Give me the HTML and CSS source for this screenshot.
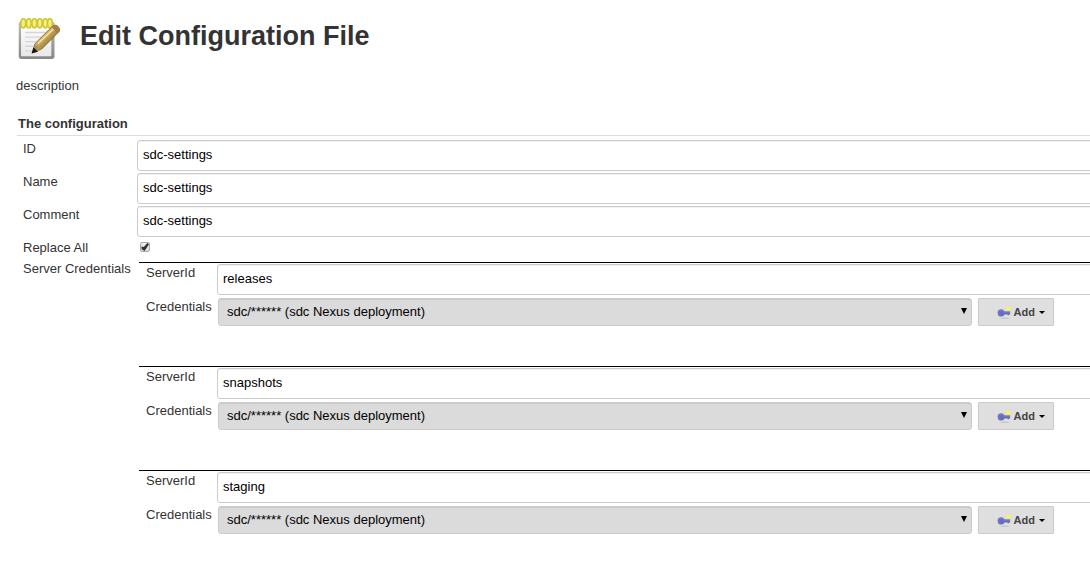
FILE: index.html
```html
<!DOCTYPE html>
<html lang="en">
<head>
<meta charset="utf-8">
<title>Edit Configuration File</title>
<link rel="stylesheet" href="styles.css">
</head>
<body>
<svg class="defs" aria-hidden="true">
  <defs>
    <symbol id="key" viewBox="0 0 16 16">
      <ellipse cx="8" cy="14.500" rx="5" ry="0.800" fill="#c8c8c8"/>
      <path d="M5 7.500h8.500v3H12v1h-1v-1H5z" fill="#656dae"/>
      <path d="M6 8h7" stroke="#8187be" stroke-width="1"/>
      <ellipse cx="4.200" cy="9" rx="3.600" ry="3.700" fill="#7279c3"/>
      <ellipse cx="4.700" cy="9.500" rx="2.400" ry="2.300" fill="#656db9"/>
      <circle cx="11.500" cy="4.700" r="2.300" fill="#f0f05a"/>
      <circle cx="11.500" cy="4.700" r="1.300" fill="#ffff30"/>
    </symbol>
  </defs>
</svg>
<main class="page">
  <header class="heading">
    <svg class="notepad" viewBox="0 0 48 48" aria-hidden="true">
      <defs>
        <linearGradient id="paper" x1="0" y1="0" x2="0" y2="1">
          <stop offset="0" stop-color="#ffffff"/><stop offset="1" stop-color="#e8e8ea"/>
        </linearGradient>
        <linearGradient id="edge" x1="0" y1="0" x2="0" y2="1">
          <stop offset="0" stop-color="#b9bcb6"/><stop offset="1" stop-color="#858a83"/>
        </linearGradient>
        <linearGradient id="wood" x1="0" y1="0" x2="1" y2="1">
          <stop offset="0.300" stop-color="#e5cf86"/><stop offset="0.700" stop-color="#927024"/>
        </linearGradient>
      </defs>
      <rect x="3" y="6" width="39" height="41" rx="3" fill="url(#edge)"/>
      <rect x="5.500" y="8" width="33" height="36" rx="1" fill="url(#paper)"/>
      <path d="M10 18h24M10 23h20M10 28h17M10 33h12M10 38h9" stroke="#d6d6d9" stroke-width="1.500"/>
      <g fill="#f4ef86" stroke="#d0c62a" stroke-width="1.800">
        <ellipse cx="8" cy="8" rx="2.600" ry="5"/><ellipse cx="14" cy="8" rx="2.600" ry="5"/>
        <ellipse cx="20" cy="8" rx="2.600" ry="5"/><ellipse cx="26" cy="8" rx="2.600" ry="5"/>
        <ellipse cx="32" cy="8" rx="2.600" ry="5"/><ellipse cx="37" cy="8" rx="2.600" ry="5"/>
      </g>
      <path d="M18 40l3-10 19-19c4-3 9 2 7 6L28 36z" fill="url(#wood)" stroke="#86682a" stroke-width="1"/>
      <path d="M24 30l17-16" stroke="#eedc9a" stroke-width="2"/>
      <path d="M18 40l3-9 6 6z" fill="#ad9259"/>
      <path d="M17 41l2-7 5 5z" fill="#191510"/>
      <path d="M39 12l6 7 2-2c2-4-3-9-7-6z" fill="#a77e45"/>
    </svg>
    <h1 class="title">Edit Configuration File</h1>
  </header>
  <p class="description">description</p>
  <form class="config">
    <h2 class="section">The configuration</h2>
    <div class="fields">
      <label class="label" for="id">ID</label>
      <input class="text" id="id" type="text" value="sdc-settings">
      <label class="label" for="name">Name</label>
      <input class="text" id="name" type="text" value="sdc-settings">
      <label class="label" for="comment">Comment</label>
      <input class="text" id="comment" type="text" value="sdc-settings">
      <label class="label" for="replace">Replace All</label>
      <div class="check-cell"><input class="check" id="replace" type="checkbox" checked></div>
      <span class="label" id="servers">Server Credentials</span>
      <div class="servers" role="group" aria-labelledby="servers">
        <div class="server">
          <label class="sublabel" for="server1">ServerId</label>
          <input class="text" id="server1" type="text" value="releases">
          <label class="sublabel" for="cred1">Credentials</label>
          <div class="credential">
            <div class="picker"><select class="select" id="cred1"><option>sdc/****** (sdc Nexus deployment)</option></select></div>
            <button class="add" type="button"><svg class="key" aria-hidden="true"><use href="#key"/></svg>Add<span class="caret"></span></button>
          </div>
        </div>
        <div class="server">
          <label class="sublabel" for="server2">ServerId</label>
          <input class="text" id="server2" type="text" value="snapshots">
          <label class="sublabel" for="cred2">Credentials</label>
          <div class="credential">
            <div class="picker"><select class="select" id="cred2"><option>sdc/****** (sdc Nexus deployment)</option></select></div>
            <button class="add" type="button"><svg class="key" aria-hidden="true"><use href="#key"/></svg>Add<span class="caret"></span></button>
          </div>
        </div>
        <div class="server">
          <label class="sublabel" for="server3">ServerId</label>
          <input class="text" id="server3" type="text" value="staging">
          <label class="sublabel" for="cred3">Credentials</label>
          <div class="credential">
            <div class="picker"><select class="select" id="cred3"><option>sdc/****** (sdc Nexus deployment)</option></select></div>
            <button class="add" type="button"><svg class="key" aria-hidden="true"><use href="#key"/></svg>Add<span class="caret"></span></button>
          </div>
        </div>
      </div>
    </div>
  </form>
</main>
</body>
</html>
```
FILE: styles.css
```css
* {
  box-sizing: border-box;
}

body {
  margin: 0;
  background: #fff;
  color: #333;
  font: 13px/18px "Liberation Sans", Arial, sans-serif;
}

.defs {
  position: absolute;
  width: 0;
  height: 0;
}

.page {
  padding: 16px 0 0 16px;
  overflow: hidden;
}

.heading {
  display: flex;
  gap: 20px;
}

.notepad {
  width: 44px;
  height: 44px;
  flex: none;
}

.title {
  margin: 0;
  font-size: 27px;
  line-height: 40px;
}

.description {
  margin: 17px 0 20px;
}

.section {
  margin: 0 0 0 1px;
  padding: 0 0 2px 1px;
  border-bottom: 1px solid #ddd;
  font-size: 13px;
  line-height: 18px;
}

.fields {
  display: grid;
  grid-template-columns: 115px minmax(0, 1fr);
  row-gap: 2px;
  margin-top: 4px;
  margin-left: 6px;
}

.label {
  padding-left: 1px;
}

.text {
  width: calc(100% + 8px);
  height: 31px;
  padding: 0 5px 2px;
  border: 1px solid #ccc;
  border-radius: 3px;
  box-shadow: inset 0 1px 1px #f0f0f0;
  background: #fff;
  color: #000;
  font: inherit;
}

.check-cell {
  display: flex;
  padding: 3px 3px 6px;
}

.check {
  appearance: none;
  width: 10px;
  height: 10px;
  margin: 0;
  border: 1px solid #aaa;
  border-radius: 2px;
  background: linear-gradient(#eee, #ddd);
}

.check:checked::after {
  content: "";
  display: block;
  width: 8px;
  height: 8px;
  background: #333;
  clip-path: polygon(5% 45%, 35% 50%, 80% 0, 100% 15%, 45% 100%, 8% 78%);
}

.servers {
  margin: 2px 0 0 2px;
}

.server {
  display: grid;
  grid-template-columns: 71px minmax(0, 1fr);
  row-gap: 3px;
  padding: 1px 0 40px 7px;
  border-top: 1px solid #000;
}

.credential {
  display: flex;
  gap: 6px;
  padding: 0 36px 0 1px;
}

.picker {
  position: relative;
  flex: 1;
}

.picker::after {
  content: "";
  position: absolute;
  top: 10px;
  right: 5px;
  border: solid transparent;
  border-width: 6px 3px 0;
  border-top-color: #000;
  pointer-events: none;
}

.select {
  appearance: none;
  display: block;
  width: 100%;
  height: 28px;
  padding: 0 20px 0 8px;
  border: 1px solid #ccc;
  border-radius: 3px;
  box-shadow: inset 0 1px 1px #c8c8c8;
  background: #dbdbdb;
  color: #000;
  font: inherit;
}

.add {
  display: flex;
  align-items: center;
  width: 76px;
  height: 28px;
  padding: 0 8px 0 18px;
  border: 1px solid #ccc;
  border-radius: 1px;
  background: #dfdfdf;
  color: #444;
  font: bold 11px/16px "Liberation Sans", Arial, sans-serif;
}

.key {
  width: 16px;
  height: 16px;
  margin-right: 1px;
}

.caret {
  margin-left: 4px;
  border: solid transparent;
  border-width: 3px 3px 0;
  border-top-color: #000;
}
```
